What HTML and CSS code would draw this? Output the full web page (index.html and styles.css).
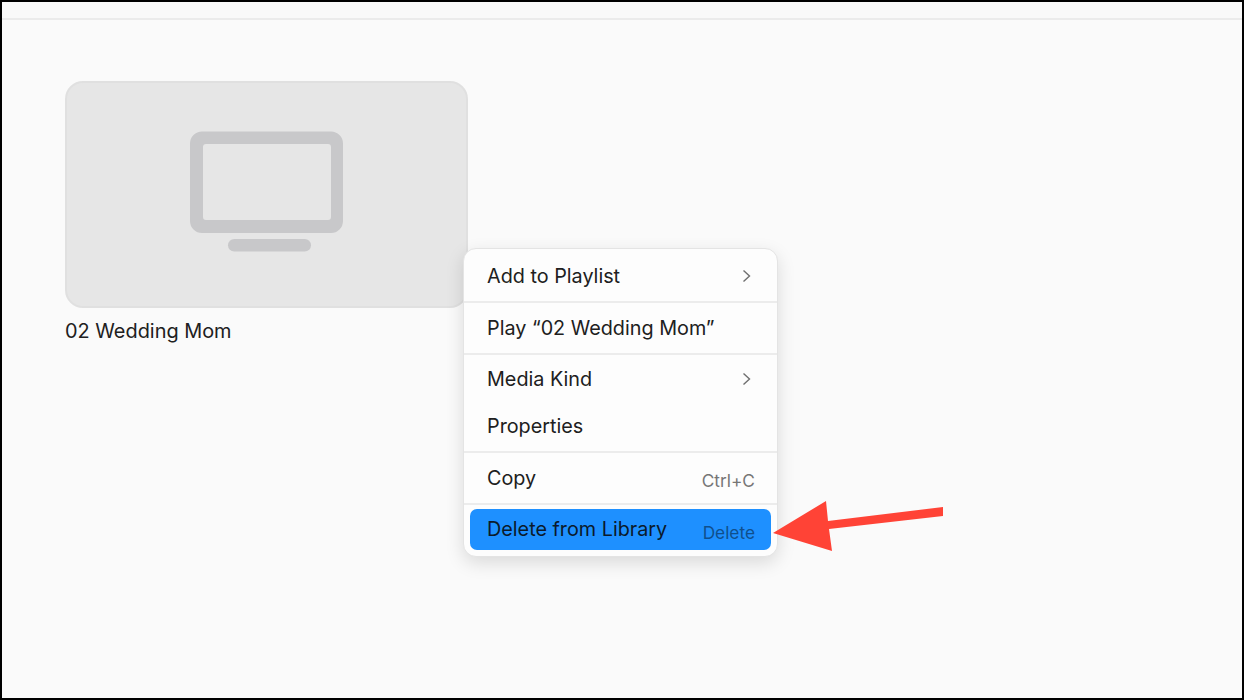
FILE: index.html
```html
<!DOCTYPE html>
<html lang="en">
<head>
    <meta charset="UTF-8"/>
    <title>Library</title>
    <link rel="stylesheet" href="styles.css">
</head>
<body>
<div class="frame">
    <div class="topbar"></div>
    <main class="library">
        <div class="tile">
            <div class="thumb">
                <svg class="tv" width="154" height="122" viewBox="0 0 154 122">
                    <path fill-rule="evenodd" fill="#c8c8ca" d="M12 0.5 H141 A12 12 0 0 1 153 12.5 V90 A12 12 0 0 1 141 102 H12 A12 12 0 0 1 0 90 V12.5 A12 12 0 0 1 12 0.5 Z M16 13 A3 3 0 0 0 13 16 V86 A3 3 0 0 0 16 89 H138 A3 3 0 0 0 141 86 V16 A3 3 0 0 0 138 13 Z"/>
                    <rect x="38" y="108" width="83" height="12.5" rx="6.25" fill="#c8c8ca"/>
                </svg>
            </div>
            <div class="caption">02 Wedding Mom</div>
        </div>
    </main>

    <div class="menu">
        <div class="group">
            <div class="item first"><span>Add to Playlist</span>
                <svg class="chevron" width="9" height="14" viewBox="0 0 9 14"><path d="M1.5 1.5 L7.5 7 L1.5 12.5" fill="none" stroke="#6f6f6f" stroke-width="1.4"/></svg>
            </div>
        </div>
        <div class="group">
            <div class="item play"><span>Play “02 Wedding Mom”</span></div>
        </div>
        <div class="group">
            <div class="item media"><span>Media Kind</span>
                <svg class="chevron" width="9" height="14" viewBox="0 0 9 14"><path d="M1.5 1.5 L7.5 7 L1.5 12.5" fill="none" stroke="#6f6f6f" stroke-width="1.4"/></svg>
            </div>
            <div class="item props"><span>Properties</span></div>
        </div>
        <div class="group">
            <div class="item copy"><span>Copy</span><span class="key">Ctrl+C</span></div>
        </div>
        <div class="group last">
            <div class="item active"><span>Delete from Library</span><span class="key">Delete</span></div>
        </div>
    </div>

    <svg class="arrow" width="174" height="52" viewBox="0 0 174 52">
        <path d="M2 33 L55 1 L57 21 L172 7 L172 16 L58 29 L61 51 Z" fill="#ff4336"/>
    </svg>
</div>
</body>
</html>
```

FILE: styles.css
```css
* {
    box-sizing: border-box;
}

html, body {
    margin: 0;
    height: 100%;
}

body {
    font-family: Inter, "Liberation Sans", sans-serif;
    color: #202020;
}

.frame {
    position: relative;
    width: 1244px;
    height: 700px;
    border: 2px solid #000;
    background: #fafafa;
    overflow: hidden;
}

.topbar {
    height: 18px;
    background: #f9f9f9;
    border-bottom: 2px solid #ebebeb;
}

.library {
    padding: 61px 63px 0;
}

.tile {
    width: 403px;
}

.thumb {
    height: 227px;
    display: flex;
    align-items: flex-start;
    justify-content: center;
    padding-top: 48px;
    background: #e6e6e6;
    border: 2px solid #e0e0e0;
    border-radius: 18px;
}

.tv {
    display: block;
}

.caption {
    margin-top: 11px;
    font-size: 19.9px;
    line-height: 24px;
}

.menu {
    position: absolute;
    left: 461px;
    top: 246px;
    width: 315px;
    background: #fdfdfd;
    border: 1px solid #e4e4e4;
    border-radius: 13px;
    box-shadow: 0 6px 18px rgba(0, 0, 0, 0.13);
}

.group {
    border-bottom: 2px solid #ececec;
}

.group.last {
    border-bottom: 0;
    padding: 4px 6px 6px;
}

.item {
    padding: 0 22px 0 23px;
    display: flex;
    align-items: center;
    justify-content: space-between;
    font-size: 19.8px;
}

.item.first {
    height: 51.5px;
    padding-top: 2px;
}

.item.play {
    height: 50px;
}

.item.media {
    height: 49px;
}

.item.props {
    height: 47.5px;
    padding-bottom: 3px;
}

.item.copy {
    height: 49.5px;
}

.key {
    font-size: 17.3px;
    color: #767676;
    padding-top: 6px;
}

.chevron {
    margin-right: 4px;
}

.item.active {
    height: 41px;
    padding: 0 16px 0 17px;
    background: #1e90ff;
    border-radius: 7px;
    color: #0b1a2b;
}

.active .key {
    color: #104f8c;
}

.arrow {
    position: absolute;
    left: 769px;
    top: 498px;
}
```
